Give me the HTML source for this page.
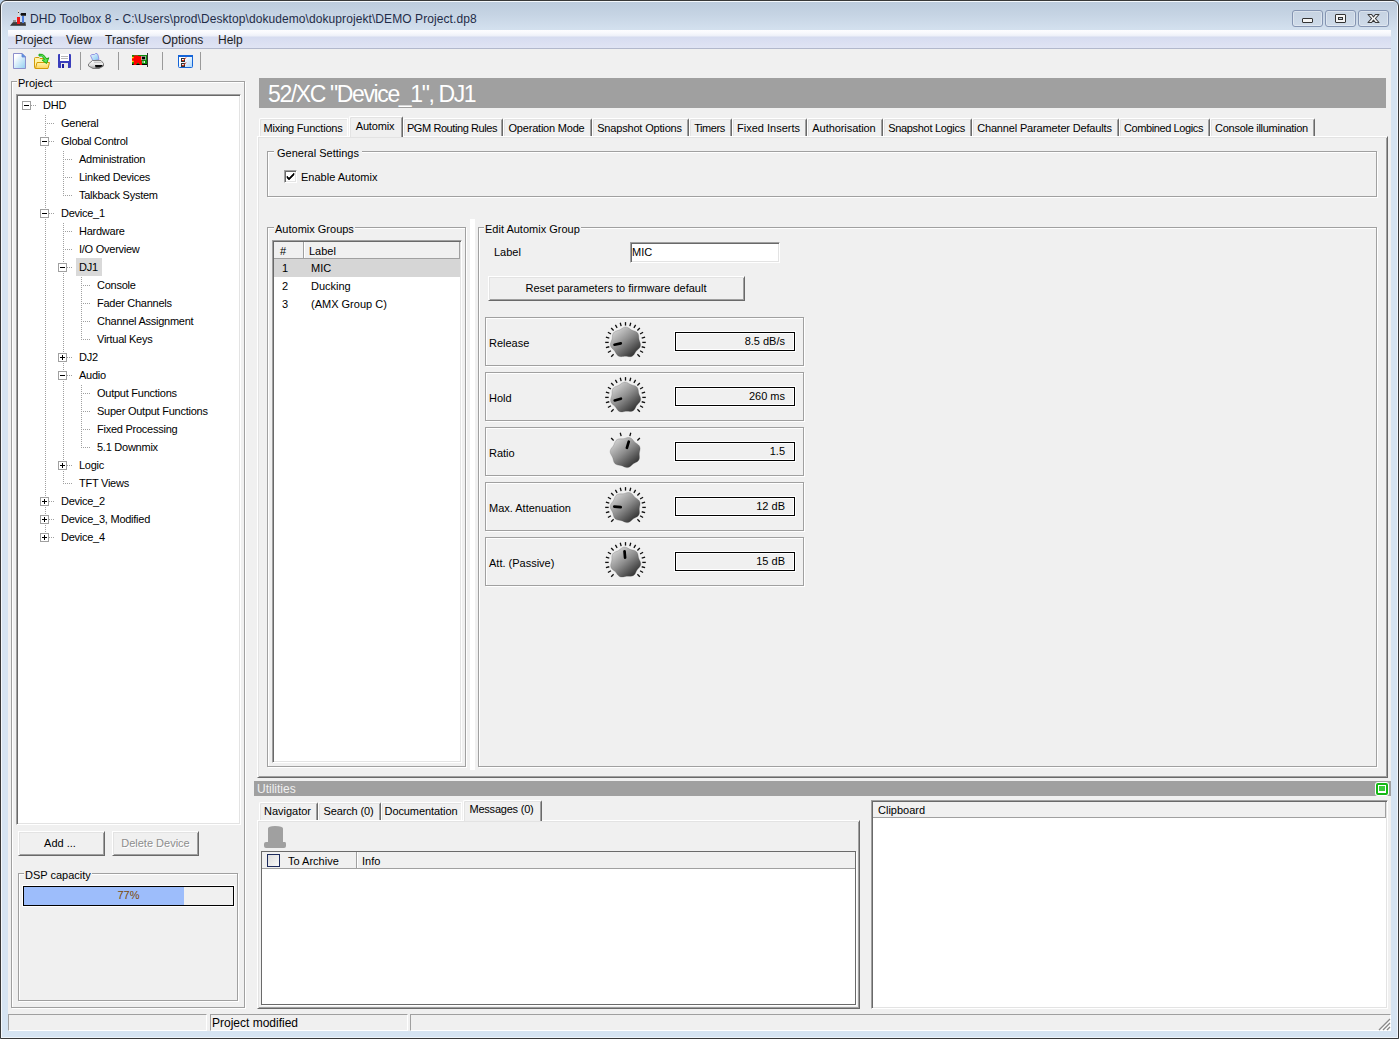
<!DOCTYPE html>
<html><head><meta charset="utf-8">
<style>
html,body{margin:0;padding:0}
body{width:1399px;height:1039px;position:relative;overflow:hidden;background:#b9d1ea;font-family:"Liberation Sans",sans-serif;font-size:11px;color:#000}
div,span{box-sizing:border-box}
.a{position:absolute}
.t{position:absolute;white-space:pre;font-size:11px;line-height:13px}
.frame{position:absolute;left:0;top:0;width:1399px;height:1039px;border:1px solid #383838;border-radius:6px 6px 0 0;background:linear-gradient(#bccbdd 0px,#c6d4e4 14px,#d3e0ee 28px,#d6e4f2 40px,#d6e4f2 100%);box-shadow:inset 1px 1px 0 #f4f8fc,inset -1px -1px 0 #eef4fa}
.client{position:absolute;left:8px;top:30px;width:1383px;height:1001px;background:#f0f0f0}
.etch{position:absolute;border:1px solid #a0a0a0;box-shadow:inset 1px 1px 0 #fff,1px 1px 0 #fff}
.sunk{position:absolute;border:1px solid;border-color:#a0a0a0 #fff #fff #a0a0a0;box-shadow:inset 1px 1px 0 #696969,inset -1px -1px 0 #e3e3e3;background:#fff}
.btn{position:absolute;border:1px solid;border-color:#fff #696969 #696969 #fff;box-shadow:inset 1px 1px 0 #e3e3e3,inset -1px -1px 0 #a0a0a0;background:#f0f0f0;text-align:center;line-height:21px}
.gl{background:#f0f0f0;padding:0 1px}
.tb{position:absolute;width:31px;height:17px;border:1px solid #8595b2;border-radius:3px;background:linear-gradient(#c6d3e2,#cfdbe9);box-shadow:inset 0 0 0 1px rgba(255,255,255,.35)}
.sep{position:absolute;top:52px;width:2px;height:18px;border-left:1px solid #a0a0a0;border-right:1px solid #fff}
</style></head><body>
<div class="frame"></div>
<!-- title -->
<svg class="a" style="left:0;top:0" width="30" height="30" viewBox="0 0 30 30">
  <defs><linearGradient id="ib" x1="0" y1="0" x2="0" y2="1"><stop offset="0" stop-color="#505050"/><stop offset="1" stop-color="#2a2a2a"/></linearGradient></defs>
  <rect x="18" y="10" width="1" height="6" fill="#e8e0d0"/>
  <rect x="18" y="12" width="1" height="1" fill="#404040"/>
  <path d="M10 25.8L13 22H25.5L26 25.8Z" fill="url(#ib)"/>
  <rect x="13" y="20" width="3" height="2" fill="#909090"/>
  <rect x="17" y="17" width="3" height="7" fill="#f01818"/>
  <rect x="22" y="16" width="2" height="7" fill="#4a7ce0"/>
  <path d="M20.3 14.3L21.2 13H26V15.8H21.2Z" fill="#111"/>
</svg>
<div class="t" style="left:30px;top:12px;font-size:12px;line-height:15px;color:#1f2c48;letter-spacing:0.08px">DHD Toolbox 8 - C:\Users\prod\Desktop\dokudemo\dokuprojekt\DEMO Project.dp8</div>
<div class="tb" style="left:1292px;top:10px"><div class="a" style="left:9px;top:7px;width:11px;height:5px;background:#f4f4f4;border:1px solid #333;border-radius:1px"></div></div>
<div class="tb" style="left:1325px;top:10px"><div class="a" style="left:9px;top:3px;width:11px;height:9px;background:#f4f4f4;border:1px solid #333;border-radius:1px"><div class="a" style="left:2px;top:2px;width:5px;height:3px;background:#c6d3e2;border:1px solid #333"></div></div></div>
<div class="tb" style="left:1358px;top:10px">
 <svg class="a" style="left:7px;top:1px" width="15" height="13" viewBox="0 0 15 13"><path d="M2 2.5H5.6L7.5 4.9L9.4 2.5H13L9.4 6.5L13 10.5H9.4L7.5 8.1L5.6 10.5H2L5.6 6.5Z" fill="#f8f8f8" stroke="#3a3a3a" stroke-width="1.1" stroke-linejoin="round"/></svg>
</div>

<div class="client"></div>
<!-- menu -->
<div class="a" style="left:8px;top:30px;width:1383px;height:19px;background:linear-gradient(#fdfdff 0px,#f8f9fd 3px,#edf0f8 6px,#d6dcf0 7px,#d9def1 10px,#e0e4f4 18px);border-bottom:1px solid #b2b8cc"></div>
<div class="t" style="left:15px;top:33px;font-size:12px;line-height:15px;color:#1e1e1e">Project</div>
<div class="t" style="left:66px;top:33px;font-size:12px;line-height:15px;color:#1e1e1e">View</div>
<div class="t" style="left:105px;top:33px;font-size:12px;line-height:15px;color:#1e1e1e">Transfer</div>
<div class="t" style="left:162px;top:33px;font-size:12px;line-height:15px;color:#1e1e1e">Options</div>
<div class="t" style="left:218px;top:33px;font-size:12px;line-height:15px;color:#1e1e1e">Help</div>

<!-- TOOLBAR START -->
<svg class="a" style="left:13px;top:53px" width="13" height="16" viewBox="0 0 13 16">
 <defs><linearGradient id="nd" x1="0" y1="0" x2="1" y2="1"><stop offset="0.2" stop-color="#fff"/><stop offset="1" stop-color="#90cdf0"/></linearGradient></defs>
 <path d="M0.5 0.5H9L12.5 4V15.5H0.5Z" fill="url(#nd)" stroke="#8c8fcc"/>
 <path d="M9 0.5V4H12.5Z" fill="#4b9ae6" stroke="#6f80d0" stroke-width="0.8"/>
</svg>
<svg class="a" style="left:34px;top:53px" width="17" height="16" viewBox="0 0 17 16">
 <defs><linearGradient id="fo" x1="0" y1="0" x2="0" y2="1"><stop offset="0" stop-color="#fff6b0"/><stop offset="1" stop-color="#ffd25a"/></linearGradient></defs>
 <path d="M0.5 5.5Q0.5 4.5 1.5 4.5H5L6 5.5H13.5V15.5H1.5Q0.5 15.5 0.5 14.5Z" fill="#fff4a8" stroke="#d39a08"/>
 <path d="M3 9.5H15.5L14 15.5H1.5Z" fill="url(#fo)" stroke="#d39a08"/>
 <path d="M5 1.2Q9 0.5 11 3.5L12.5 5.8L14.8 4.8L12.5 10.5L8.2 7.2L10.4 6.6L9.2 4.4Q8 2.6 5 3Z" fill="#5ae34e" stroke="#12a012" stroke-width="0.9"/>
</svg>
<svg class="a" style="left:58px;top:54px" width="13" height="14" viewBox="0 0 13 14">
 <path d="M1 0H12Q13 0 13 1V13Q13 14 12 14H1Q0 14 0 13V1Q0 0 1 0Z" fill="#3a3ebc"/>
 <rect x="2" y="0" width="9" height="7" fill="#fff"/>
 <rect x="3" y="2" width="7" height="1" fill="#b8b8b8"/><rect x="3" y="4" width="7" height="1" fill="#b8b8b8"/>
 <rect x="3" y="9" width="7" height="5" fill="#e8e8e8"/><rect x="4" y="10" width="2" height="4" fill="#1a1a9a"/>
</svg>
<div class="a" style="left:80px;top:52px;width:1px;height:18px;background:#9a9a9a"></div>
<svg class="a" style="left:88px;top:53px" width="16" height="16" viewBox="0 0 16 16">
 <defs><linearGradient id="pp" x1="0" y1="0" x2="1" y2="1"><stop offset="0" stop-color="#eef8ff"/><stop offset="1" stop-color="#7cc4f0"/></linearGradient>
 <linearGradient id="pb" x1="0" y1="0" x2="0" y2="1"><stop offset="0" stop-color="#ffffff"/><stop offset="0.6" stop-color="#e0e0e0"/><stop offset="1" stop-color="#9a9a9a"/></linearGradient></defs>
 <path d="M2.5 2.5L4 1.5H6.5L7.5 0.5H9L10 2L11 6.5L5 8Z" fill="url(#pp)" stroke="#8c8ce0" stroke-width="0.9"/>
 <path d="M0.5 11L4.5 7.5H13L15.5 10.5V13L11 15.5H5L0.5 13Z" fill="url(#pb)" stroke="#707070" stroke-width="0.9"/>
 <path d="M5.5 8.5H12.5L14 10H6Z" fill="#c8c8c8"/>
 <path d="M7 12H14.5V13.2L11.5 14.6H7.5Z" fill="#0a0a0a"/>
</svg>
<div class="a" style="left:118px;top:52px;width:1px;height:18px;background:#9a9a9a"></div>
<svg class="a" style="left:132px;top:53px" width="16" height="14" viewBox="0 0 16 14">
 <rect x="0" y="2" width="15" height="10" fill="#0a8a0a"/>
 <rect x="0" y="11" width="15" height="1" fill="#000"/>
 <path d="M0 4L3 3L5 2.5L7 3L10 3.5L9.5 6L10 12H8L6 9.5L4 12H1.5L2 9L0 8Z" fill="#ff0000"/>
 <circle cx="0.8" cy="4.6" r="0.9" fill="#ffee00"/><circle cx="0.8" cy="8.4" r="0.9" fill="#ffee00"/>
 <rect x="2.5" y="2" width="1" height="1" fill="#ff2020"/><rect x="4.5" y="2" width="1" height="1" fill="#ff2020"/>
 <rect x="9.5" y="3" width="4" height="4" fill="#fff"/><rect x="10" y="3.5" width="3" height="3" fill="#000"/>
 <path d="M10 9H13M12 8L13 9L12 10M10 10.5" stroke="#fff" stroke-width="0.8" fill="none"/>
 <rect x="15" y="0" width="1" height="14" fill="#333"/>
</svg>
<div class="a" style="left:162px;top:52px;width:1px;height:18px;background:#9a9a9a"></div>
<svg class="a" style="left:178px;top:55px" width="15" height="13" viewBox="0 0 15 13">
 <defs><linearGradient id="cl" x1="0" y1="0" x2="1" y2="1"><stop offset="0.3" stop-color="#fff"/><stop offset="1" stop-color="#a8d4fa"/></linearGradient></defs>
 <rect x="0.5" y="0.5" width="14" height="12" rx="1" fill="url(#cl)" stroke="#1464d8"/>
 <rect x="0" y="0" width="15" height="2" fill="#1464d8"/>
 <rect x="3.5" y="3.5" width="3" height="3" fill="none" stroke="#333"/>
 <rect x="3.5" y="8.5" width="3" height="3" fill="none" stroke="#333"/>
 <path d="M4 5L5 6L8 2.5M4 10L5 11L8 7.5" stroke="#e03010" stroke-width="1" fill="none"/>
</svg>
<div class="a" style="left:200px;top:52px;width:1px;height:18px;background:#9a9a9a"></div>
<!-- TOOLBAR END -->


<!-- LEFT PANEL -->
<div class="etch" style="left:11px;top:81px;width:234px;height:927px"></div>
<div class="t gl" style="left:17px;top:77px">Project</div>
<div class="sunk" style="left:16px;top:94px;width:225px;height:731px"></div>
<svg class="a" style="left:0;top:0" width="260" height="560" shape-rendering="crispEdges"><path d="M45.5 115V538" stroke="#a0a0a0" stroke-dasharray="1 1"/><path d="M63.5 151V196" stroke="#a0a0a0" stroke-dasharray="1 1"/><path d="M63.5 223V484" stroke="#a0a0a0" stroke-dasharray="1 1"/><path d="M81.5 277V340" stroke="#a0a0a0" stroke-dasharray="1 1"/><path d="M81.5 385V448" stroke="#a0a0a0" stroke-dasharray="1 1"/><path d="M31 105.5H36" stroke="#a0a0a0" stroke-dasharray="1 1"/><path d="M45 123.5H54" stroke="#a0a0a0" stroke-dasharray="1 1"/><path d="M49 141.5H54" stroke="#a0a0a0" stroke-dasharray="1 1"/><path d="M63 159.5H72" stroke="#a0a0a0" stroke-dasharray="1 1"/><path d="M63 177.5H72" stroke="#a0a0a0" stroke-dasharray="1 1"/><path d="M63 195.5H72" stroke="#a0a0a0" stroke-dasharray="1 1"/><path d="M49 213.5H54" stroke="#a0a0a0" stroke-dasharray="1 1"/><path d="M63 231.5H72" stroke="#a0a0a0" stroke-dasharray="1 1"/><path d="M63 249.5H72" stroke="#a0a0a0" stroke-dasharray="1 1"/><path d="M67 267.5H72" stroke="#a0a0a0" stroke-dasharray="1 1"/><path d="M81 285.5H90" stroke="#a0a0a0" stroke-dasharray="1 1"/><path d="M81 303.5H90" stroke="#a0a0a0" stroke-dasharray="1 1"/><path d="M81 321.5H90" stroke="#a0a0a0" stroke-dasharray="1 1"/><path d="M81 339.5H90" stroke="#a0a0a0" stroke-dasharray="1 1"/><path d="M67 357.5H72" stroke="#a0a0a0" stroke-dasharray="1 1"/><path d="M67 375.5H72" stroke="#a0a0a0" stroke-dasharray="1 1"/><path d="M81 393.5H90" stroke="#a0a0a0" stroke-dasharray="1 1"/><path d="M81 411.5H90" stroke="#a0a0a0" stroke-dasharray="1 1"/><path d="M81 429.5H90" stroke="#a0a0a0" stroke-dasharray="1 1"/><path d="M81 447.5H90" stroke="#a0a0a0" stroke-dasharray="1 1"/><path d="M67 465.5H72" stroke="#a0a0a0" stroke-dasharray="1 1"/><path d="M63 483.5H72" stroke="#a0a0a0" stroke-dasharray="1 1"/><path d="M49 501.5H54" stroke="#a0a0a0" stroke-dasharray="1 1"/><path d="M49 519.5H54" stroke="#a0a0a0" stroke-dasharray="1 1"/><path d="M49 537.5H54" stroke="#a0a0a0" stroke-dasharray="1 1"/><rect x="22.5" y="101.5" width="8" height="8" fill="#fff" stroke="#a0a0a0"/><rect x="24" y="105" width="5" height="1" fill="#000"/><rect x="40.5" y="137.5" width="8" height="8" fill="#fff" stroke="#a0a0a0"/><rect x="42" y="141" width="5" height="1" fill="#000"/><rect x="40.5" y="209.5" width="8" height="8" fill="#fff" stroke="#a0a0a0"/><rect x="42" y="213" width="5" height="1" fill="#000"/><rect x="58.5" y="263.5" width="8" height="8" fill="#fff" stroke="#a0a0a0"/><rect x="60" y="267" width="5" height="1" fill="#000"/><rect x="58.5" y="353.5" width="8" height="8" fill="#fff" stroke="#a0a0a0"/><rect x="60" y="357" width="5" height="1" fill="#000"/><rect x="62" y="355" width="1" height="5" fill="#000"/><rect x="58.5" y="371.5" width="8" height="8" fill="#fff" stroke="#a0a0a0"/><rect x="60" y="375" width="5" height="1" fill="#000"/><rect x="58.5" y="461.5" width="8" height="8" fill="#fff" stroke="#a0a0a0"/><rect x="60" y="465" width="5" height="1" fill="#000"/><rect x="62" y="463" width="1" height="5" fill="#000"/><rect x="40.5" y="497.5" width="8" height="8" fill="#fff" stroke="#a0a0a0"/><rect x="42" y="501" width="5" height="1" fill="#000"/><rect x="44" y="499" width="1" height="5" fill="#000"/><rect x="40.5" y="515.5" width="8" height="8" fill="#fff" stroke="#a0a0a0"/><rect x="42" y="519" width="5" height="1" fill="#000"/><rect x="44" y="517" width="1" height="5" fill="#000"/><rect x="40.5" y="533.5" width="8" height="8" fill="#fff" stroke="#a0a0a0"/><rect x="42" y="537" width="5" height="1" fill="#000"/><rect x="44" y="535" width="1" height="5" fill="#000"/></svg>
<div class="t" style="left:43px;top:99px;letter-spacing:-0.25px">DHD</div>
<div class="t" style="left:61px;top:117px;letter-spacing:-0.25px">General</div>
<div class="t" style="left:61px;top:135px;letter-spacing:-0.25px">Global Control</div>
<div class="t" style="left:79px;top:153px;letter-spacing:-0.25px">Administration</div>
<div class="t" style="left:79px;top:171px;letter-spacing:-0.25px">Linked Devices</div>
<div class="t" style="left:79px;top:189px;letter-spacing:-0.25px">Talkback System</div>
<div class="t" style="left:61px;top:207px;letter-spacing:-0.25px">Device_1</div>
<div class="t" style="left:79px;top:225px;letter-spacing:-0.25px">Hardware</div>
<div class="t" style="left:79px;top:243px;letter-spacing:-0.25px">I/O Overview</div>
<div class="a" style="left:76px;top:258px;width:26px;height:18px;background:#d9d9d9"></div>
<div class="t" style="left:79px;top:261px;letter-spacing:-0.25px">DJ1</div>
<div class="t" style="left:97px;top:279px;letter-spacing:-0.25px">Console</div>
<div class="t" style="left:97px;top:297px;letter-spacing:-0.25px">Fader Channels</div>
<div class="t" style="left:97px;top:315px;letter-spacing:-0.25px">Channel Assignment</div>
<div class="t" style="left:97px;top:333px;letter-spacing:-0.25px">Virtual Keys</div>
<div class="t" style="left:79px;top:351px;letter-spacing:-0.25px">DJ2</div>
<div class="t" style="left:79px;top:369px;letter-spacing:-0.25px">Audio</div>
<div class="t" style="left:97px;top:387px;letter-spacing:-0.25px">Output Functions</div>
<div class="t" style="left:97px;top:405px;letter-spacing:-0.25px">Super Output Functions</div>
<div class="t" style="left:97px;top:423px;letter-spacing:-0.25px">Fixed Processing</div>
<div class="t" style="left:97px;top:441px;letter-spacing:-0.25px">5.1 Downmix</div>
<div class="t" style="left:79px;top:459px;letter-spacing:-0.25px">Logic</div>
<div class="t" style="left:79px;top:477px;letter-spacing:-0.25px">TFT Views</div>
<div class="t" style="left:61px;top:495px;letter-spacing:-0.25px">Device_2</div>
<div class="t" style="left:61px;top:513px;letter-spacing:-0.25px">Device_3, Modified</div>
<div class="t" style="left:61px;top:531px;letter-spacing:-0.25px">Device_4</div>
<div class="btn" style="left:18px;top:831px;width:87px;height:25px;line-height:23px;padding-right:3px">Add ...</div>
<div class="btn" style="left:112px;top:831px;width:87px;height:25px;line-height:23px;color:#8d8d8d;text-shadow:1px 1px 0 #fff">Delete Device</div>
<div class="etch" style="left:18px;top:873px;width:220px;height:128px"></div>
<div class="t gl" style="left:24px;top:869px">DSP capacity</div>
<div class="a" style="left:23px;top:886px;width:211px;height:20px;border:1px solid #000;background:#f0f0f0;box-shadow:0 0 0 1px #fff"></div>
<div class="a" style="left:24px;top:887px;width:160px;height:18px;background:#9dbdfb"></div>
<div class="t" style="left:23px;top:889px;width:211px;text-align:center;color:#7a4808">77%</div>


<!-- RIGHT PANEL -->
<!-- RIGHT START -->
<div class="a" style="left:259px;top:78px;width:1127px;height:30px;background:#a0a0a0"></div>
<div class="t" style="left:268px;top:81px;font-size:23px;line-height:26px;color:#fff;letter-spacing:-1.38px">52/XC "Device_1", DJ1</div>
<div class="a" style="left:257px;top:136px;width:1131px;height:642px;border-top:1px solid #fff;border-left:1px solid #fff;border-right:1px solid #696969;border-bottom:1px solid #696969;box-shadow:inset 1px 1px 0 #e3e3e3,inset -1px -1px 0 #a0a0a0"></div>
<div class="a" style="left:259px;top:118px;width:89px;height:18px;border-top:1px solid #fff;border-left:1px solid #fff;border-right:1px solid #fff;box-shadow:inset 1px 1px 0 #e3e3e3;border-radius:2px 0 0 0"></div>
<div class="t" style="left:259px;top:122px;width:90px;text-align:center;letter-spacing:-0.22px;text-indent:-2px">Mixing Functions</div>
<div class="a" style="left:349px;top:116px;width:54px;height:21px;background:#f0f0f0;border-top:1px solid #fff;border-left:1px solid #fff;border-right:1px solid #696969;box-shadow:inset 1px 1px 0 #e3e3e3,inset -1px 0 0 #a0a0a0;border-radius:2px 2px 0 0"></div>
<div class="t" style="left:349px;top:120px;width:54px;text-align:center;letter-spacing:-0.17px;text-indent:-2px">Automix</div>
<div class="a" style="left:403px;top:118px;width:100px;height:18px;border-top:1px solid #fff;border-left:1px solid #fff;border-right:1px solid #696969;box-shadow:inset 1px 1px 0 #e3e3e3,inset -1px 0 0 #a0a0a0;border-radius:2px 2px 0 0"></div>
<div class="t" style="left:403px;top:122px;width:100px;text-align:center;letter-spacing:-0.42px;text-indent:-2px">PGM Routing Rules</div>
<div class="a" style="left:503px;top:118px;width:89px;height:18px;border-top:1px solid #fff;border-left:1px solid #fff;border-right:1px solid #696969;box-shadow:inset 1px 1px 0 #e3e3e3,inset -1px 0 0 #a0a0a0;border-radius:2px 2px 0 0"></div>
<div class="t" style="left:503px;top:122px;width:89px;text-align:center;letter-spacing:-0.21px;text-indent:-2px">Operation Mode</div>
<div class="a" style="left:592px;top:118px;width:97px;height:18px;border-top:1px solid #fff;border-left:1px solid #fff;border-right:1px solid #696969;box-shadow:inset 1px 1px 0 #e3e3e3,inset -1px 0 0 #a0a0a0;border-radius:2px 2px 0 0"></div>
<div class="t" style="left:592px;top:122px;width:97px;text-align:center;letter-spacing:-0.17px;text-indent:-2px">Snapshot Options</div>
<div class="a" style="left:689px;top:118px;width:43px;height:18px;border-top:1px solid #fff;border-left:1px solid #fff;border-right:1px solid #696969;box-shadow:inset 1px 1px 0 #e3e3e3,inset -1px 0 0 #a0a0a0;border-radius:2px 2px 0 0"></div>
<div class="t" style="left:689px;top:122px;width:43px;text-align:center;letter-spacing:-0.42px;text-indent:-2px">Timers</div>
<div class="a" style="left:732px;top:118px;width:75px;height:18px;border-top:1px solid #fff;border-left:1px solid #fff;border-right:1px solid #696969;box-shadow:inset 1px 1px 0 #e3e3e3,inset -1px 0 0 #a0a0a0;border-radius:2px 2px 0 0"></div>
<div class="t" style="left:732px;top:122px;width:75px;text-align:center;letter-spacing:0.00px;text-indent:-2px">Fixed Inserts</div>
<div class="a" style="left:807px;top:118px;width:76px;height:18px;border-top:1px solid #fff;border-left:1px solid #fff;border-right:1px solid #696969;box-shadow:inset 1px 1px 0 #e3e3e3,inset -1px 0 0 #a0a0a0;border-radius:2px 2px 0 0"></div>
<div class="t" style="left:807px;top:122px;width:76px;text-align:center;letter-spacing:-0.07px;text-indent:-2px">Authorisation</div>
<div class="a" style="left:883px;top:118px;width:89px;height:18px;border-top:1px solid #fff;border-left:1px solid #fff;border-right:1px solid #696969;box-shadow:inset 1px 1px 0 #e3e3e3,inset -1px 0 0 #a0a0a0;border-radius:2px 2px 0 0"></div>
<div class="t" style="left:883px;top:122px;width:89px;text-align:center;letter-spacing:-0.31px;text-indent:-2px">Snapshot Logics</div>
<div class="a" style="left:972px;top:118px;width:147px;height:18px;border-top:1px solid #fff;border-left:1px solid #fff;border-right:1px solid #696969;box-shadow:inset 1px 1px 0 #e3e3e3,inset -1px 0 0 #a0a0a0;border-radius:2px 2px 0 0"></div>
<div class="t" style="left:972px;top:122px;width:147px;text-align:center;letter-spacing:-0.16px;text-indent:-2px">Channel Parameter Defaults</div>
<div class="a" style="left:1119px;top:118px;width:91px;height:18px;border-top:1px solid #fff;border-left:1px solid #fff;border-right:1px solid #696969;box-shadow:inset 1px 1px 0 #e3e3e3,inset -1px 0 0 #a0a0a0;border-radius:2px 2px 0 0"></div>
<div class="t" style="left:1119px;top:122px;width:91px;text-align:center;letter-spacing:-0.40px;text-indent:-2px">Combined Logics</div>
<div class="a" style="left:1210px;top:118px;width:105px;height:18px;border-top:1px solid #fff;border-left:1px solid #fff;border-right:1px solid #696969;box-shadow:inset 1px 1px 0 #e3e3e3,inset -1px 0 0 #a0a0a0;border-radius:2px 2px 0 0"></div>
<div class="t" style="left:1210px;top:122px;width:105px;text-align:center;letter-spacing:-0.28px;text-indent:-2px">Console illumination</div>
<div class="etch" style="left:267px;top:151px;width:1110px;height:46px"></div>
<div class="t gl" style="left:274px;top:147px;padding:0 3px">General Settings</div>
<div class="sunk" style="left:284px;top:170px;width:13px;height:13px"></div>
<svg class="a" style="left:284px;top:170px" width="13" height="13"><path d="M3 6l2 2 5-5v2l-5 5-2-2z" fill="#000" stroke="#000" stroke-width="0.6"/></svg>
<div class="t" style="left:301px;top:171px">Enable Automix</div>
<div class="etch" style="left:267px;top:227px;width:199px;height:540px"></div>
<div class="t gl" style="left:274px;top:223px">Automix Groups</div>
<div class="sunk" style="left:272px;top:240px;width:190px;height:523px"></div>
<div class="a" style="left:274px;top:242px;width:186px;height:17px;background:#f0f0f0;border-bottom:1px solid #a0a0a0;border-right:1px solid #a0a0a0"></div>
<div class="a" style="left:303px;top:242px;width:1px;height:16px;background:#a0a0a0"></div>
<div class="a" style="left:304px;top:242px;width:1px;height:16px;background:#fff"></div>
<div class="t" style="left:280px;top:245px">#</div>
<div class="t" style="left:309px;top:245px">Label</div>
<div class="a" style="left:274px;top:259px;width:186px;height:18px;background:#d6d6d6"></div>
<div class="t" style="left:282px;top:262px">1</div>
<div class="t" style="left:311px;top:262px">MIC</div>
<div class="t" style="left:282px;top:280px">2</div>
<div class="t" style="left:311px;top:280px">Ducking</div>
<div class="t" style="left:282px;top:298px">3</div>
<div class="t" style="left:311px;top:298px">(AMX Group C)</div>
<div class="a" style="left:470px;top:219px;width:5px;height:551px;background:#fff"></div>
<div class="etch" style="left:478px;top:227px;width:899px;height:540px"></div>
<div class="t gl" style="left:484px;top:223px">Edit Automix Group</div>
<div class="t" style="left:494px;top:246px">Label</div>
<div class="sunk" style="left:630px;top:242px;width:150px;height:21px"></div>
<div class="t" style="left:632px;top:246px">MIC</div>
<div class="btn" style="left:488px;top:276px;width:257px;height:25px;line-height:23px;padding-right:1px">Reset parameters to firmware default</div>
<div class="etch" style="left:485px;top:317px;width:319px;height:49px"></div>
<div class="t" style="left:489px;top:337px">Release</div>
<div class="a" style="left:675px;top:332px;width:120px;height:19px;border:1px solid #000;box-shadow:0 0 0 1px #fff,inset 0 0 0 1px #fff"></div>
<div class="t" style="left:675px;top:335px;width:110px;text-align:right">8.5 dB/s</div>
<svg class="a" style="left:603px;top:320px" width="45" height="45" viewBox="0 0 45 45"><defs><linearGradient id="kg0" x1="0.15" y1="0.1" x2="0.85" y2="0.95"><stop offset="0" stop-color="#d2d2d2"/><stop offset="0.45" stop-color="#8e8e8e"/><stop offset="1" stop-color="#2a2a2a"/></linearGradient></defs><line x1="10.62" y1="34.28" x2="8.15" y2="36.75" stroke="#111" stroke-width="1.3"/><line x1="7.95" y1="30.80" x2="4.92" y2="32.55" stroke="#111" stroke-width="1.3"/><line x1="6.27" y1="26.75" x2="2.89" y2="27.65" stroke="#111" stroke-width="1.3"/><line x1="5.70" y1="22.40" x2="2.20" y2="22.40" stroke="#111" stroke-width="1.3"/><line x1="6.27" y1="18.05" x2="2.89" y2="17.15" stroke="#111" stroke-width="1.3"/><line x1="7.95" y1="14.00" x2="4.92" y2="12.25" stroke="#111" stroke-width="1.3"/><line x1="10.62" y1="10.52" x2="8.15" y2="8.05" stroke="#111" stroke-width="1.3"/><line x1="14.10" y1="7.85" x2="12.35" y2="4.82" stroke="#111" stroke-width="1.3"/><line x1="18.15" y1="6.17" x2="17.25" y2="2.79" stroke="#111" stroke-width="1.3"/><line x1="22.50" y1="5.60" x2="22.50" y2="2.10" stroke="#111" stroke-width="1.3"/><line x1="26.85" y1="6.17" x2="27.75" y2="2.79" stroke="#111" stroke-width="1.3"/><line x1="30.90" y1="7.85" x2="32.65" y2="4.82" stroke="#111" stroke-width="1.3"/><line x1="34.38" y1="10.52" x2="36.85" y2="8.05" stroke="#111" stroke-width="1.3"/><line x1="37.05" y1="14.00" x2="40.08" y2="12.25" stroke="#111" stroke-width="1.3"/><line x1="38.73" y1="18.05" x2="42.11" y2="17.15" stroke="#111" stroke-width="1.3"/><line x1="39.30" y1="22.40" x2="42.80" y2="22.40" stroke="#111" stroke-width="1.3"/><line x1="38.73" y1="26.75" x2="42.11" y2="27.65" stroke="#111" stroke-width="1.3"/><line x1="37.05" y1="30.80" x2="40.08" y2="32.55" stroke="#111" stroke-width="1.3"/><line x1="34.38" y1="34.28" x2="36.85" y2="36.75" stroke="#111" stroke-width="1.3"/><polygon points="22.50,7.05 23.64,7.16 24.74,7.53 25.77,8.09 26.71,8.74 27.61,9.37 28.51,9.92 29.46,10.35 30.48,10.70 31.55,11.05 32.64,11.47 33.65,12.06 34.50,12.83 35.13,13.79 35.53,14.88 35.72,16.03 35.81,17.18 35.87,18.28 36.01,19.32 36.26,20.33 36.62,21.34 37.02,22.40 37.36,23.51 37.54,24.67 37.46,25.81 37.11,26.91 36.50,27.90 35.72,28.77 34.88,29.55 34.06,30.28 33.33,31.04 32.70,31.86 32.13,32.78 31.55,33.75 30.90,34.72 30.10,35.57 29.16,36.23 28.08,36.63 26.93,36.77 25.77,36.71 24.63,36.54 23.55,36.35 22.50,36.25 21.46,36.28 20.39,36.40 19.27,36.56 18.11,36.64 16.94,36.56 15.84,36.23 14.86,35.64 14.03,34.83 13.35,33.88 12.78,32.88 12.24,31.92 11.67,31.04 11.00,30.24 10.24,29.48 9.42,28.70 8.63,27.85 7.97,26.88 7.54,25.81 7.39,24.68 7.50,23.52 7.82,22.40 8.25,21.33 8.66,20.31 8.99,19.32 9.20,18.30 9.32,17.23 9.42,16.10 9.59,14.95 9.94,13.83 10.50,12.83 11.30,12.00 12.27,11.37 13.35,10.92 14.45,10.59 15.50,10.28 16.49,9.92 17.42,9.45 18.33,8.87 19.27,8.24 20.28,7.66 21.36,7.24" fill="url(#kg0)" stroke="#555" stroke-width="0.5" stroke-opacity="0.5"/><line x1="17.80" y1="23.40" x2="11.54" y2="24.73" stroke="#000" stroke-width="2.7" stroke-linecap="round"/></svg>
<div class="etch" style="left:485px;top:372px;width:319px;height:49px"></div>
<div class="t" style="left:489px;top:392px">Hold</div>
<div class="a" style="left:675px;top:387px;width:120px;height:19px;border:1px solid #000;box-shadow:0 0 0 1px #fff,inset 0 0 0 1px #fff"></div>
<div class="t" style="left:675px;top:390px;width:110px;text-align:right">260 ms</div>
<svg class="a" style="left:603px;top:375px" width="45" height="45" viewBox="0 0 45 45"><defs><linearGradient id="kg1" x1="0.15" y1="0.1" x2="0.85" y2="0.95"><stop offset="0" stop-color="#d2d2d2"/><stop offset="0.45" stop-color="#8e8e8e"/><stop offset="1" stop-color="#2a2a2a"/></linearGradient></defs><line x1="10.62" y1="34.28" x2="8.15" y2="36.75" stroke="#111" stroke-width="1.3"/><line x1="7.95" y1="30.80" x2="4.92" y2="32.55" stroke="#111" stroke-width="1.3"/><line x1="6.27" y1="26.75" x2="2.89" y2="27.65" stroke="#111" stroke-width="1.3"/><line x1="5.70" y1="22.40" x2="2.20" y2="22.40" stroke="#111" stroke-width="1.3"/><line x1="6.27" y1="18.05" x2="2.89" y2="17.15" stroke="#111" stroke-width="1.3"/><line x1="7.95" y1="14.00" x2="4.92" y2="12.25" stroke="#111" stroke-width="1.3"/><line x1="10.62" y1="10.52" x2="8.15" y2="8.05" stroke="#111" stroke-width="1.3"/><line x1="14.10" y1="7.85" x2="12.35" y2="4.82" stroke="#111" stroke-width="1.3"/><line x1="18.15" y1="6.17" x2="17.25" y2="2.79" stroke="#111" stroke-width="1.3"/><line x1="22.50" y1="5.60" x2="22.50" y2="2.10" stroke="#111" stroke-width="1.3"/><line x1="26.85" y1="6.17" x2="27.75" y2="2.79" stroke="#111" stroke-width="1.3"/><line x1="30.90" y1="7.85" x2="32.65" y2="4.82" stroke="#111" stroke-width="1.3"/><line x1="34.38" y1="10.52" x2="36.85" y2="8.05" stroke="#111" stroke-width="1.3"/><line x1="37.05" y1="14.00" x2="40.08" y2="12.25" stroke="#111" stroke-width="1.3"/><line x1="38.73" y1="18.05" x2="42.11" y2="17.15" stroke="#111" stroke-width="1.3"/><line x1="39.30" y1="22.40" x2="42.80" y2="22.40" stroke="#111" stroke-width="1.3"/><line x1="38.73" y1="26.75" x2="42.11" y2="27.65" stroke="#111" stroke-width="1.3"/><line x1="37.05" y1="30.80" x2="40.08" y2="32.55" stroke="#111" stroke-width="1.3"/><line x1="34.38" y1="34.28" x2="36.85" y2="36.75" stroke="#111" stroke-width="1.3"/><polygon points="22.50,7.10 23.63,7.38 24.69,7.86 25.69,8.44 26.63,9.01 27.56,9.50 28.53,9.87 29.57,10.16 30.67,10.42 31.78,10.77 32.83,11.26 33.75,11.96 34.46,12.86 34.94,13.92 35.23,15.05 35.40,16.19 35.54,17.28 35.74,18.32 36.06,19.31 36.48,20.29 36.96,21.32 37.38,22.40 37.65,23.54 37.67,24.69 37.41,25.80 36.89,26.84 36.19,27.77 35.40,28.61 34.63,29.40 33.95,30.21 33.37,31.07 32.86,32.02 32.36,33.03 31.78,34.03 31.06,34.95 30.17,35.69 29.14,36.18 28.00,36.42 26.83,36.45 25.69,36.36 24.59,36.25 23.54,36.22 22.50,36.30 21.44,36.50 20.34,36.73 19.19,36.91 18.02,36.92 16.89,36.68 15.86,36.18 14.97,35.44 14.22,34.55 13.57,33.60 12.97,32.67 12.34,31.83 11.63,31.07 10.82,30.36 9.95,29.65 9.09,28.86 8.36,27.95 7.84,26.92 7.59,25.80 7.61,24.64 7.84,23.50 8.18,22.40 8.53,21.35 8.80,20.33 8.94,19.31 8.99,18.23 9.01,17.10 9.09,15.94 9.34,14.80 9.82,13.76 10.54,12.86 11.46,12.16 12.50,11.62 13.57,11.20 14.61,10.83 15.57,10.40 16.47,9.87 17.33,9.24 18.23,8.55 19.19,7.89 20.24,7.38 21.35,7.10" fill="url(#kg1)" stroke="#555" stroke-width="0.5" stroke-opacity="0.5"/><line x1="17.89" y1="23.72" x2="11.73" y2="25.49" stroke="#000" stroke-width="2.7" stroke-linecap="round"/></svg>
<div class="etch" style="left:485px;top:427px;width:319px;height:49px"></div>
<div class="t" style="left:489px;top:447px">Ratio</div>
<div class="a" style="left:675px;top:442px;width:120px;height:19px;border:1px solid #000;box-shadow:0 0 0 1px #fff,inset 0 0 0 1px #fff"></div>
<div class="t" style="left:675px;top:445px;width:110px;text-align:right">1.5</div>
<svg class="a" style="left:603px;top:430px" width="45" height="45" viewBox="0 0 45 45"><defs><linearGradient id="kg2" x1="0.15" y1="0.1" x2="0.85" y2="0.95"><stop offset="0" stop-color="#d2d2d2"/><stop offset="0.45" stop-color="#8e8e8e"/><stop offset="1" stop-color="#2a2a2a"/></linearGradient></defs><line x1="10.62" y1="10.52" x2="8.15" y2="8.05" stroke="#111" stroke-width="1.3"/><line x1="18.15" y1="6.17" x2="17.25" y2="2.79" stroke="#111" stroke-width="1.3"/><line x1="26.85" y1="6.17" x2="27.75" y2="2.79" stroke="#111" stroke-width="1.3"/><line x1="34.38" y1="10.52" x2="36.85" y2="8.05" stroke="#111" stroke-width="1.3"/><polygon points="22.50,8.16 23.59,7.83 24.73,7.58 25.89,7.53 27.02,7.73 28.07,8.21 28.99,8.92 29.79,9.77 30.51,10.66 31.19,11.50 31.92,12.25 32.73,12.91 33.63,13.52 34.57,14.17 35.48,14.91 36.25,15.78 36.79,16.79 37.07,17.91 37.09,19.07 36.92,20.23 36.67,21.34 36.44,22.40 36.31,23.44 36.30,24.48 36.38,25.57 36.46,26.71 36.45,27.88 36.25,29.02 35.79,30.07 35.09,30.99 34.20,31.73 33.19,32.32 32.17,32.82 31.19,33.30 30.30,33.84 29.48,34.49 28.68,35.23 27.84,36.00 26.92,36.72 25.89,37.27 24.79,37.58 23.64,37.60 22.50,37.36 21.41,36.95 20.38,36.45 19.40,35.99 18.42,35.63 17.40,35.39 16.32,35.23 15.19,35.06 14.06,34.78 12.99,34.33 12.06,33.65 11.33,32.77 10.80,31.73 10.45,30.62 10.19,29.51 9.94,28.45 9.61,27.46 9.16,26.51 8.62,25.57 8.05,24.58 7.56,23.52 7.24,22.40 7.19,21.25 7.43,20.13 7.91,19.07 8.56,18.10 9.27,17.21 9.94,16.35 10.51,15.47 10.97,14.54 11.37,13.52 11.79,12.46 12.31,11.41 12.99,10.47 13.85,9.72 14.88,9.20 16.01,8.92 17.17,8.82 18.31,8.82 19.40,8.81 20.44,8.70 21.46,8.48" fill="url(#kg2)" stroke="#555" stroke-width="0.5" stroke-opacity="0.5"/><line x1="23.90" y1="17.81" x2="25.77" y2="11.69" stroke="#000" stroke-width="2.7" stroke-linecap="round"/></svg>
<div class="etch" style="left:485px;top:482px;width:319px;height:49px"></div>
<div class="t" style="left:489px;top:502px">Max. Attenuation</div>
<div class="a" style="left:675px;top:497px;width:120px;height:19px;border:1px solid #000;box-shadow:0 0 0 1px #fff,inset 0 0 0 1px #fff"></div>
<div class="t" style="left:675px;top:500px;width:110px;text-align:right">12 dB</div>
<svg class="a" style="left:603px;top:485px" width="45" height="45" viewBox="0 0 45 45"><defs><linearGradient id="kg3" x1="0.15" y1="0.1" x2="0.85" y2="0.95"><stop offset="0" stop-color="#d2d2d2"/><stop offset="0.45" stop-color="#8e8e8e"/><stop offset="1" stop-color="#2a2a2a"/></linearGradient></defs><line x1="10.62" y1="34.28" x2="8.15" y2="36.75" stroke="#111" stroke-width="1.3"/><line x1="7.95" y1="30.80" x2="4.92" y2="32.55" stroke="#111" stroke-width="1.3"/><line x1="6.27" y1="26.75" x2="2.89" y2="27.65" stroke="#111" stroke-width="1.3"/><line x1="5.70" y1="22.40" x2="2.20" y2="22.40" stroke="#111" stroke-width="1.3"/><line x1="6.27" y1="18.05" x2="2.89" y2="17.15" stroke="#111" stroke-width="1.3"/><line x1="7.95" y1="14.00" x2="4.92" y2="12.25" stroke="#111" stroke-width="1.3"/><line x1="10.62" y1="10.52" x2="8.15" y2="8.05" stroke="#111" stroke-width="1.3"/><line x1="14.10" y1="7.85" x2="12.35" y2="4.82" stroke="#111" stroke-width="1.3"/><line x1="18.15" y1="6.17" x2="17.25" y2="2.79" stroke="#111" stroke-width="1.3"/><line x1="22.50" y1="5.60" x2="22.50" y2="2.10" stroke="#111" stroke-width="1.3"/><line x1="26.85" y1="6.17" x2="27.75" y2="2.79" stroke="#111" stroke-width="1.3"/><line x1="30.90" y1="7.85" x2="32.65" y2="4.82" stroke="#111" stroke-width="1.3"/><line x1="34.38" y1="10.52" x2="36.85" y2="8.05" stroke="#111" stroke-width="1.3"/><line x1="37.05" y1="14.00" x2="40.08" y2="12.25" stroke="#111" stroke-width="1.3"/><line x1="38.73" y1="18.05" x2="42.11" y2="17.15" stroke="#111" stroke-width="1.3"/><line x1="39.30" y1="22.40" x2="42.80" y2="22.40" stroke="#111" stroke-width="1.3"/><line x1="38.73" y1="26.75" x2="42.11" y2="27.65" stroke="#111" stroke-width="1.3"/><line x1="37.05" y1="30.80" x2="40.08" y2="32.55" stroke="#111" stroke-width="1.3"/><line x1="34.38" y1="34.28" x2="36.85" y2="36.75" stroke="#111" stroke-width="1.3"/><polygon points="22.50,8.15 23.59,7.81 24.74,7.57 25.90,7.52 27.02,7.73 28.07,8.22 28.99,8.93 29.79,9.78 30.50,10.67 31.19,11.50 31.92,12.25 32.74,12.90 33.64,13.52 34.58,14.16 35.49,14.90 36.25,15.78 36.79,16.79 37.06,17.91 37.08,19.07 36.91,20.23 36.66,21.34 36.44,22.40 36.31,23.44 36.31,24.48 36.39,25.57 36.48,26.71 36.46,27.88 36.25,29.02 35.79,30.07 35.09,30.98 34.19,31.72 33.18,32.31 32.16,32.81 31.19,33.30 30.30,33.84 29.48,34.49 28.68,35.24 27.84,36.02 26.92,36.73 25.90,37.28 24.79,37.58 23.64,37.59 22.50,37.35 21.41,36.93 20.38,36.44 19.40,35.99 18.42,35.64 17.40,35.40 16.32,35.24 15.19,35.07 14.05,34.79 12.98,34.33 12.06,33.65 11.33,32.76 10.81,31.72 10.46,30.61 10.20,29.50 9.94,28.45 9.61,27.46 9.16,26.52 8.61,25.57 8.04,24.58 7.54,23.52 7.24,22.40 7.19,21.25 7.43,20.13 7.92,19.07 8.57,18.10 9.28,17.21 9.94,16.35 10.51,15.47 10.96,14.53 11.36,13.52 11.78,12.45 12.30,11.41 12.98,10.47 13.85,9.72 14.88,9.21 16.01,8.93 17.18,8.83 18.31,8.83 19.40,8.81 20.44,8.70 21.46,8.48" fill="url(#kg3)" stroke="#555" stroke-width="0.5" stroke-opacity="0.5"/><line x1="17.71" y1="22.07" x2="11.33" y2="21.62" stroke="#000" stroke-width="2.7" stroke-linecap="round"/></svg>
<div class="etch" style="left:485px;top:537px;width:319px;height:49px"></div>
<div class="t" style="left:489px;top:557px">Att. (Passive)</div>
<div class="a" style="left:675px;top:552px;width:120px;height:19px;border:1px solid #000;box-shadow:0 0 0 1px #fff,inset 0 0 0 1px #fff"></div>
<div class="t" style="left:675px;top:555px;width:110px;text-align:right">15 dB</div>
<svg class="a" style="left:603px;top:540px" width="45" height="45" viewBox="0 0 45 45"><defs><linearGradient id="kg4" x1="0.15" y1="0.1" x2="0.85" y2="0.95"><stop offset="0" stop-color="#d2d2d2"/><stop offset="0.45" stop-color="#8e8e8e"/><stop offset="1" stop-color="#2a2a2a"/></linearGradient></defs><line x1="10.62" y1="34.28" x2="8.15" y2="36.75" stroke="#111" stroke-width="1.3"/><line x1="7.95" y1="30.80" x2="4.92" y2="32.55" stroke="#111" stroke-width="1.3"/><line x1="6.27" y1="26.75" x2="2.89" y2="27.65" stroke="#111" stroke-width="1.3"/><line x1="5.70" y1="22.40" x2="2.20" y2="22.40" stroke="#111" stroke-width="1.3"/><line x1="6.27" y1="18.05" x2="2.89" y2="17.15" stroke="#111" stroke-width="1.3"/><line x1="7.95" y1="14.00" x2="4.92" y2="12.25" stroke="#111" stroke-width="1.3"/><line x1="10.62" y1="10.52" x2="8.15" y2="8.05" stroke="#111" stroke-width="1.3"/><line x1="14.10" y1="7.85" x2="12.35" y2="4.82" stroke="#111" stroke-width="1.3"/><line x1="18.15" y1="6.17" x2="17.25" y2="2.79" stroke="#111" stroke-width="1.3"/><line x1="22.50" y1="5.60" x2="22.50" y2="2.10" stroke="#111" stroke-width="1.3"/><line x1="26.85" y1="6.17" x2="27.75" y2="2.79" stroke="#111" stroke-width="1.3"/><line x1="30.90" y1="7.85" x2="32.65" y2="4.82" stroke="#111" stroke-width="1.3"/><line x1="34.38" y1="10.52" x2="36.85" y2="8.05" stroke="#111" stroke-width="1.3"/><line x1="37.05" y1="14.00" x2="40.08" y2="12.25" stroke="#111" stroke-width="1.3"/><line x1="38.73" y1="18.05" x2="42.11" y2="17.15" stroke="#111" stroke-width="1.3"/><line x1="39.30" y1="22.40" x2="42.80" y2="22.40" stroke="#111" stroke-width="1.3"/><line x1="38.73" y1="26.75" x2="42.11" y2="27.65" stroke="#111" stroke-width="1.3"/><line x1="37.05" y1="30.80" x2="40.08" y2="32.55" stroke="#111" stroke-width="1.3"/><line x1="34.38" y1="34.28" x2="36.85" y2="36.75" stroke="#111" stroke-width="1.3"/><polygon points="22.50,7.19 23.61,7.52 24.67,8.03 25.65,8.59 26.60,9.10 27.56,9.50 28.57,9.80 29.64,10.03 30.76,10.28 31.87,10.65 32.89,11.20 33.75,11.96 34.40,12.91 34.82,14.00 35.09,15.13 35.27,16.25 35.46,17.31 35.74,18.32 36.13,19.29 36.62,20.27 37.12,21.30 37.53,22.40 37.74,23.54 37.68,24.69 37.33,25.79 36.75,26.80 36.03,27.71 35.27,28.55 34.56,29.36 33.95,30.20 33.43,31.12 32.97,32.11 32.47,33.15 31.87,34.15 31.11,35.02 30.17,35.69 29.10,36.11 27.95,36.29 26.78,36.29 25.65,36.21 24.57,36.16 23.54,36.21 22.50,36.39 21.43,36.64 20.31,36.90 19.16,37.05 18.00,37.00 16.89,36.69 15.90,36.11 15.04,35.32 14.31,34.41 13.67,33.48 13.03,32.60 12.35,31.82 11.57,31.12 10.70,30.45 9.80,29.73 8.96,28.92 8.28,27.98 7.83,26.92 7.67,25.79 7.75,24.62 8.01,23.49 8.33,22.40 8.62,21.36 8.80,20.34 8.87,19.29 8.85,18.19 8.85,17.04 8.96,15.88 9.27,14.76 9.82,13.75 10.60,12.91 11.57,12.25 12.61,11.75 13.67,11.32 14.66,10.90 15.57,10.40 16.43,9.80 17.28,9.10 18.18,8.39 19.16,7.75 20.22,7.29 21.35,7.10" fill="url(#kg4)" stroke="#555" stroke-width="0.5" stroke-opacity="0.5"/><line x1="22.08" y1="17.62" x2="21.52" y2="11.24" stroke="#000" stroke-width="2.7" stroke-linecap="round"/></svg>
<!-- RIGHT END -->
<!-- UTILITIES -->
<!-- UTIL START -->
<div class="a" style="left:254px;top:781px;width:1137px;height:15px;background:#a0a0a0"></div>
<div class="t" style="left:257px;top:782px;font-size:12px;line-height:15px;color:#f0f0f0">Utilities</div>
<div class="a" style="left:1375px;top:782px;width:14px;height:14px;border-radius:3px;background:#fff"></div>
<div class="a" style="left:1376px;top:783px;width:12px;height:12px;border:2px solid #14b814;border-radius:2px;background:#fff"></div>
<div class="a" style="left:1379px;top:786px;width:6px;height:5px;background:#3ccc3c"></div>
<div class="a" style="left:257px;top:820px;width:603px;height:189px;border-top:1px solid #fff;border-left:1px solid #fff;border-right:1px solid #696969;border-bottom:1px solid #696969;box-shadow:inset 1px 1px 0 #e3e3e3,inset -1px -1px 0 #a0a0a0"></div>
<div class="a" style="left:259px;top:802px;width:59px;height:18px;border-top:1px solid #fff;border-left:1px solid #fff;border-right:1px solid #696969;box-shadow:inset 1px 1px 0 #e3e3e3,inset -1px 0 0 #a0a0a0;border-radius:2px 2px 0 0"></div>
<div class="t" style="left:259px;top:805px;width:59px;text-align:center;letter-spacing:-0.01px;text-indent:-2px">Navigator</div>
<div class="a" style="left:318px;top:802px;width:63px;height:18px;border-top:1px solid #fff;border-left:1px solid #fff;border-right:1px solid #696969;box-shadow:inset 1px 1px 0 #e3e3e3,inset -1px 0 0 #a0a0a0;border-radius:2px 2px 0 0"></div>
<div class="t" style="left:318px;top:805px;width:63px;text-align:center;letter-spacing:-0.14px;text-indent:-2px">Search (0)</div>
<div class="a" style="left:381px;top:802px;width:81px;height:18px;border-top:1px solid #fff;border-left:1px solid #fff;border-right:1px solid #fff;box-shadow:inset 1px 1px 0 #e3e3e3;border-radius:2px 0 0 0"></div>
<div class="t" style="left:381px;top:805px;width:82px;text-align:center;letter-spacing:-0.08px;text-indent:-2px">Documentation</div>
<div class="a" style="left:463px;top:800px;width:79px;height:21px;background:#f0f0f0;border-top:1px solid #fff;border-left:1px solid #fff;border-right:1px solid #696969;box-shadow:inset 1px 1px 0 #e3e3e3,inset -1px 0 0 #a0a0a0;border-radius:2px 2px 0 0"></div>
<div class="t" style="left:463px;top:803px;width:79px;text-align:center;letter-spacing:-0.22px;text-indent:-2px">Messages (0)</div>
<svg class="a" style="left:264px;top:826px" width="23" height="23" viewBox="0 0 23 23"><path d="M4 2.5Q4 0 11 0Q19 0 19 2.5V16H21Q22 16 22 18V20Q22 22 20 22H2Q0 22 0 20V18Q0 16 2 16H4Z" fill="#a0a0a0"/></svg>
<div class="a" style="left:261px;top:851px;width:595px;height:154px;border:1px solid #6a6a6a;background:#fff;box-shadow:1px 1px 0 #fff"></div>
<div class="a" style="left:262px;top:852px;width:593px;height:17px;background:#f0f0f0;border-bottom:1px solid #a0a0a0"></div>
<div class="a" style="left:356px;top:852px;width:1px;height:16px;background:#a0a0a0"></div>
<div class="a" style="left:357px;top:852px;width:1px;height:16px;background:#fff"></div>
<div class="a" style="left:267px;top:854px;width:13px;height:13px;border:1px solid #1c2a5c;background:linear-gradient(135deg,#dcdcdc,#fafafa)"></div>
<div class="t" style="left:288px;top:855px">To Archive</div>
<div class="t" style="left:362px;top:855px">Info</div>
<div class="sunk" style="left:871px;top:800px;width:517px;height:209px"></div>
<div class="a" style="left:873px;top:802px;width:513px;height:16px;background:#f0f0f0;border-bottom:1px solid #a0a0a0;border-right:1px solid #a0a0a0"></div>
<div class="t" style="left:878px;top:804px">Clipboard</div>
<div class="a" style="left:8px;top:1014px;width:199px;height:17px;border:1px solid;border-color:#a0a0a0 #fff #fff #a0a0a0"></div>
<div class="a" style="left:210px;top:1014px;width:198px;height:17px;border:1px solid;border-color:#a0a0a0 #fff #fff #a0a0a0"></div>
<div class="t" style="left:212px;top:1016px;font-size:12px;line-height:15px">Project modified</div>
<div class="a" style="left:410px;top:1014px;width:981px;height:17px;border:1px solid;border-color:#a0a0a0 #fff #fff #a0a0a0"></div>
<svg class="a" style="left:1377px;top:1017px" width="14" height="14" viewBox="0 0 14 14"><path d="M13 2L2 13M13 6L6 13M13 10L10 13" stroke="#fff" stroke-width="1.2" transform="translate(1,1)"/><path d="M13 2L2 13M13 6L6 13M13 10L10 13" stroke="#8a8a8a" stroke-width="1.3"/></svg>
<!-- UTIL END -->

<!-- STATUS -->

</body></html>
